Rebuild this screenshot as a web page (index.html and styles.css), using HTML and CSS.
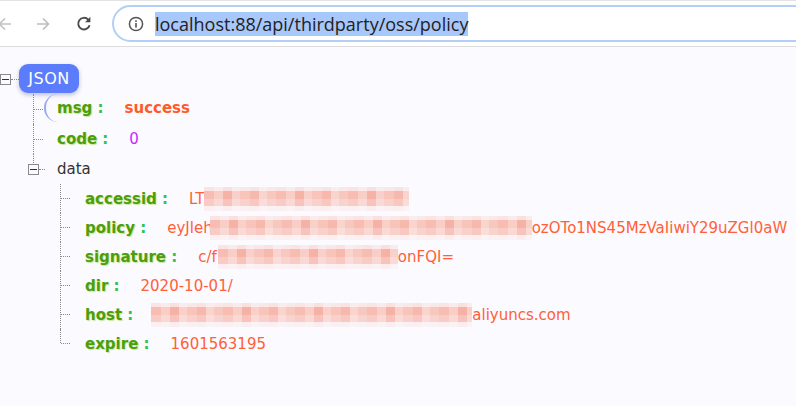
FILE: index.html
```html
<!DOCTYPE html>
<html lang="en">
<head>
    <meta charset="UTF-8">
    <meta name="viewport" content="width=device-width, initial-scale=1.0">
    <title>policy</title>
    <link rel="stylesheet" href="styles.css">
</head>
<body>

    <div class="toolbar">
        <svg class="nav-icon back" width="16" height="16" viewBox="0 0 16 16">
            <path d="M14 8H2.5M8 2.5L2.5 8L8 13.5" fill="none" stroke="currentColor" stroke-width="1.6"/>
        </svg>
        <svg class="nav-icon forward" width="16" height="16" viewBox="0 0 16 16">
            <path d="M2 8h11.5M8 2.5L13.5 8L8 13.5" fill="none" stroke="currentColor" stroke-width="1.6"/>
        </svg>
        <svg class="nav-icon reload" width="18" height="18" viewBox="0 0 18 18">
            <path d="M14.6 10.2A5.8 5.8 0 1 1 13.2 4.6" fill="none" stroke="currentColor" stroke-width="1.9"/>
            <path d="M15.4 1.8V7.2H10Z" fill="currentColor"/>
        </svg>

        <div class="address-bar">
            <svg class="info-icon" width="16" height="16" viewBox="0 0 16 16">
                <circle cx="8" cy="8" r="6.6" fill="none" stroke="currentColor" stroke-width="1.5"/>
                <rect x="7.2" y="7" width="1.6" height="4.6" fill="currentColor"/>
                <rect x="7.2" y="4.4" width="1.6" height="1.6" fill="currentColor"/>
            </svg>
            <span class="url">localhost:88/api/thirdparty/oss/policy</span>
        </div>
    </div>

    <div class="tree">
        <div class="root">
            <span class="toggle"></span>
            <span class="root-tick"></span>
            <span class="badge">JSON</span>
        </div>

        <ul class="level level-1">
            <li>
                <div class="node active">
                    <span class="key">msg</span><span class="colon"> :</span>
                    <span class="value bold">success</span>
                </div>
            </li>
            <li>
                <div class="node">
                    <span class="key">code</span><span class="colon"> :</span>
                    <span class="value number">0</span>
                </div>
            </li>
            <li class="branch">
                <span class="toggle"></span>
                <div class="node">
                    <span class="name">data</span>
                </div>

                <ul class="level level-2">
                    <li>
                        <div class="node">
                            <span class="key">accessid</span><span class="colon"> :</span>
                            <span class="value">LT<span class="mosaic m-accessid"></span></span>
                        </div>
                    </li>
                    <li>
                        <div class="node">
                            <span class="key">policy</span><span class="colon"> :</span>
                            <span class="value">eyJleh<span class="mosaic m-policy"></span>ozOTo1NS45MzVaIiwiY29uZGl0aW</span>
                        </div>
                    </li>
                    <li>
                        <div class="node">
                            <span class="key">signature</span><span class="colon"> :</span>
                            <span class="value">c/f<span class="mosaic m-signature"></span>onFQI=</span>
                        </div>
                    </li>
                    <li>
                        <div class="node">
                            <span class="key">dir</span><span class="colon"> :</span>
                            <span class="value">2020-10-01/</span>
                        </div>
                    </li>
                    <li>
                        <div class="node">
                            <span class="key">host</span><span class="colon"> :</span>
                            <span class="value"><span class="mosaic m-host"></span>aliyuncs.com</span>
                        </div>
                    </li>
                    <li>
                        <div class="node">
                            <span class="key">expire</span><span class="colon"> :</span>
                            <span class="value">1601563195</span>
                        </div>
                    </li>
                </ul>
            </li>
        </ul>
    </div>

</body>
</html>
```

FILE: styles.css
```css
body {
    margin: 0;
    font-family: "DejaVu Sans", "Open Sans", sans-serif;
    background-color: #fbfaff;
    overflow: hidden;
    white-space: nowrap;
}

/* browser bar */
.toolbar {
    display: flex;
    align-items: center;
    height: 47px;
    background-color: #ffffff;
    border-top: 1px solid #e3e3e3;
    border-bottom: 1px solid #dcdcdc;
    box-sizing: border-box;
}

.nav-icon {
    flex-shrink: 0;
}

.back {
    color: #c2c2c2;
    margin-left: -3px;
}

.forward {
    color: #bdbdbd;
    margin-left: 22px;
}

.reload {
    color: #4a4a4a;
    margin-left: 24px;
}

.address-bar {
    flex: 1;
    display: flex;
    align-items: center;
    height: 37px;
    margin-left: 19px;
    margin-right: -40px;
    border: 2px solid #b3cff6;
    border-radius: 20px;
    box-sizing: border-box;
    padding-left: 14px;
}

.info-icon {
    color: #555555;
    flex-shrink: 0;
}

.url {
    margin-left: 11px;
    font-family: "Open Sans", sans-serif;
    font-size: 18px;
    line-height: 24px;
    color: #222222;
    background-color: #a8c7fa;
}

/* json tree */
.tree {
    padding-top: 17px;
}

.root {
    display: flex;
    align-items: center;
    height: 29px;
}

.toggle {
    display: inline-block;
    width: 11px;
    height: 11px;
    box-sizing: border-box;
    border: 1px solid #8a8a8a;
    background: linear-gradient(#333, #333) center / 7px 1px no-repeat, #fbfaff;
    flex-shrink: 0;
}

.root .toggle {
    margin-top: 2px;
}

.root-tick {
    width: 8px;
    margin-top: 2px;
    border-top: 1px dotted #8a8a8a;
}

.badge {
    width: 60px;
    height: 29px;
    line-height: 29px;
    text-align: center;
    color: #ffffff;
    font-size: 16px;
    letter-spacing: 0.5px;
    background-color: #5b7dfb;
    border-radius: 9px;
    box-shadow: 0 2px 4px rgba(40, 50, 120, 0.3);
}

.level {
    list-style: none;
    margin: 0;
    padding: 0;
}

.level li {
    position: relative;
}

.level li::before {
    content: "";
    position: absolute;
    left: 0;
    top: 0;
    bottom: 0;
    border-left: 1px dotted #8a8a8a;
}

.level li:last-child::before {
    bottom: auto;
    height: 15px;
}

.level li::after {
    content: "";
    position: absolute;
    left: 1px;
    top: 15px;
    width: 9px;
    border-top: 1px dotted #8a8a8a;
}

.level-1 {
    margin-left: 33px;
}

.level-1 > li {
    height: 30px;
}

.level-1 > li.branch {
    height: auto;
}

.level-1 > li > .node {
    margin-left: 11px;
    padding-left: 13px;
}

.level-1 > li.branch::after {
    left: 6px;
    width: 6px;
}

.branch > .toggle {
    position: absolute;
    left: -5px;
    top: 10px;
    z-index: 1;
}

.level-2 {
    margin-left: 27px;
}

.level-2 > li {
    height: 29px;
}

.level-2 > li:last-child::before {
    height: 14px;
}

.level-2 > li::after {
    top: 14px;
}

.level-2 > li > .node {
    padding-left: 25px;
    height: 29px;
}

.node {
    display: flex;
    align-items: center;
    height: 30px;
    font-size: 15px;
    box-sizing: border-box;
}

.node.active {
    height: 28px;
    margin-top: 1px;
    border-left: 2px solid #98a8f2;
    border-radius: 14px 0 0 14px;
    padding-left: 11px !important;
}

.key {
    font-weight: bold;
    color: #4c9f0b;
    text-shadow: 1px 1px 1px rgba(140, 200, 40, 0.45);
}

.colon {
    font-weight: bold;
    color: #2fc34f;
    white-space: pre;
    margin-right: 21px;
}

.name {
    color: #333333;
}

.value {
    color: #ff6038;
    display: inline-flex;
    align-items: center;
}

.value.bold {
    font-weight: bold;
    color: #ff5a2a;
}

.value.number {
    color: #c22bff;
}

/* pixelated blur over hidden parts */
.mosaic {
    display: inline-block;
    height: 24px;
    filter: blur(0.6px);
    background:
        linear-gradient(to bottom, rgba(251, 250, 255, 0.7) 0 4px, rgba(251, 250, 255, 0.15) 4px 12px, rgba(251, 250, 255, 0.35) 12px 19px, rgba(251, 250, 255, 0.85) 19px),
        repeating-linear-gradient(90deg, #f7b2a5 0 10px, #f9c6bc 10px 19px, #f5a596 19px 28px, #f8c9c0 28px 36px, #f8baae 36px 46px, #f6ad9f 46px 55px, #f9cec6 55px 63px, #f7bfb4 63px 72px);
}

.m-accessid {
    width: 205px;
    margin-left: -1px;
}

.m-policy {
    width: 322px;
    margin-left: -3px;
}

.m-signature {
    width: 180px;
    margin-left: 1px;
}

.m-host {
    width: 321px;
    margin-left: -3px;
}
```
